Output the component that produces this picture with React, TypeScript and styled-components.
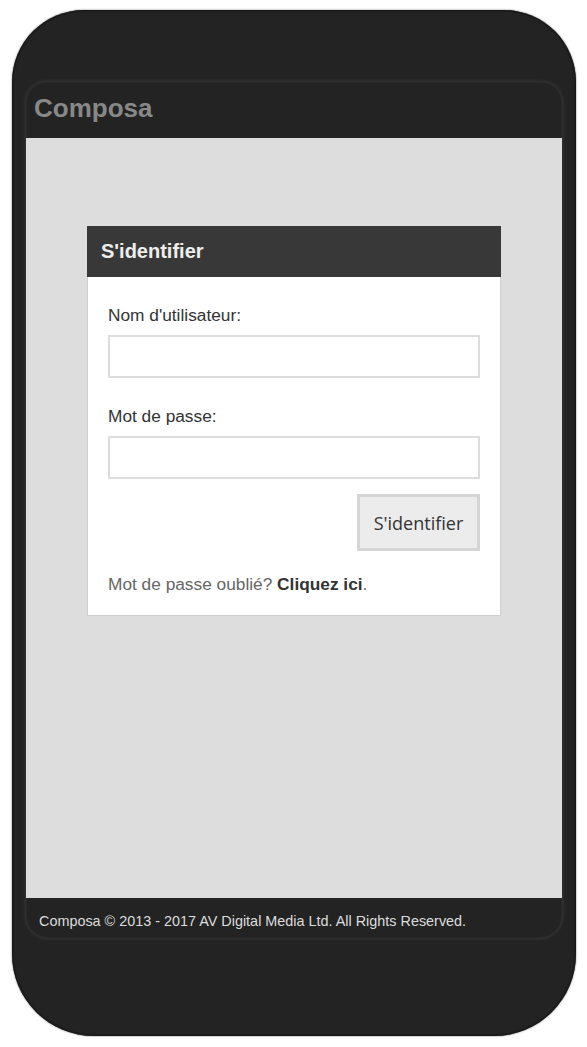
import React from "react";
import styled, { createGlobalStyle } from "styled-components";

const Global = createGlobalStyle`
  html, body { margin: 0; padding: 0; background: #ffffff; }
  body { font-family: "Liberation Sans", Arial, sans-serif; }
  * { box-sizing: border-box; }
`;

const Page = styled.div`
  width: 587px;
  height: 1047px;
  padding: 10px 11px 11px 12px;
`;

const Phone = styled.div`
  width: 564px;
  height: 1026px;
  background: #232323;
  border-radius: 72px 72px 82px 82px;
  box-shadow: 0 0 2px rgba(0, 0, 0, 0.6), inset 0 0 3px rgba(0, 0, 0, 0.9);
  padding: 72px 14px 98px 14px;
  display: flex;
`;

const Screen = styled.div`
  flex: 1;
  display: flex;
  flex-direction: column;
  border-radius: 20px 20px 22px 22px;
  overflow: hidden;
  background: #232323;
  box-shadow: 0 0 4px rgba(255, 255, 255, 0.14), inset 0 0 2px rgba(255, 255, 255, 0.1);
`;

const Header = styled.div`
  height: 56px;
  flex: none;
  display: flex;
  align-items: center;
  padding: 0 0 3px 8px;
  font-family: "Liberation Sans", Arial, sans-serif;
  font-weight: bold;
  font-size: 26px;
  color: #888888;
`;

const Content = styled.div`
  flex: 1;
  background: #dddddd;
  display: flex;
  flex-direction: column;
  align-items: center;
  padding-top: 88px;
`;

const Footer = styled.div`
  height: 40px;
  flex: none;
  display: flex;
  align-items: center;
  padding: 5px 0 0 13px;
  font-size: 14.4px;
  color: #dddddd;
`;

const Card = styled.div`
  width: 414px;
  background: #ffffff;
  border: 1px solid #cfcfcf;
  border-top: none;
`;

const CardTitle = styled.div`
  height: 51px;
  background: #383838;
  color: #eeeeee;
  font-weight: bold;
  font-size: 20px;
  display: flex;
  align-items: center;
  padding-left: 14px;
  margin: 0 -1px;
`;

const CardBody = styled.div`
  padding: 28px 20px 21px 20px;
  display: flex;
  flex-direction: column;
`;

const Label = styled.label`
  font-size: 17.3px;
  color: #333333;
  line-height: 20px;
  margin-bottom: 10px;
`;

const Input = styled.input`
  width: 100%;
  height: 43px;
  border: 2px solid #dddddd;
  background: #ffffff;
  outline: none;
  margin-bottom: 28px;
`;

const Actions = styled.div`
  display: flex;
  justify-content: flex-end;
  margin-top: -13px;
`;

const Button = styled.button`
  width: 123px;
  height: 57px;
  background: #ececec;
  border: 3px solid #d5d5d5;
  font-family: "Open Sans", sans-serif;
  font-size: 18px;
  color: #333333;
  padding: 0;
`;

const Forgot = styled.p`
  margin: 23px 0 0 0;
  font-size: 17.3px;
  line-height: 20px;
  color: #666666;
`;

const Strong = styled.b`
  color: #333333;
`;

export default function App() {
  return (
    <Page>
      <Global />
      <Phone>
        <Screen>
          <Header>Composa</Header>
          <Content>
            <Card>
              <CardTitle>S'identifier</CardTitle>
              <CardBody>
                <Label>Nom d'utilisateur:</Label>
                <Input type="text" />
                <Label>Mot de passe:</Label>
                <Input type="password" />
                <Actions>
                  <Button>S'identifier</Button>
                </Actions>
                <Forgot>
                  Mot de passe oublié? <Strong>Cliquez ici</Strong>.
                </Forgot>
              </CardBody>
            </Card>
          </Content>
          <Footer>Composa © 2013 - 2017 AV Digital Media Ltd. All Rights Reserved.</Footer>
        </Screen>
      </Phone>
    </Page>
  );
}
